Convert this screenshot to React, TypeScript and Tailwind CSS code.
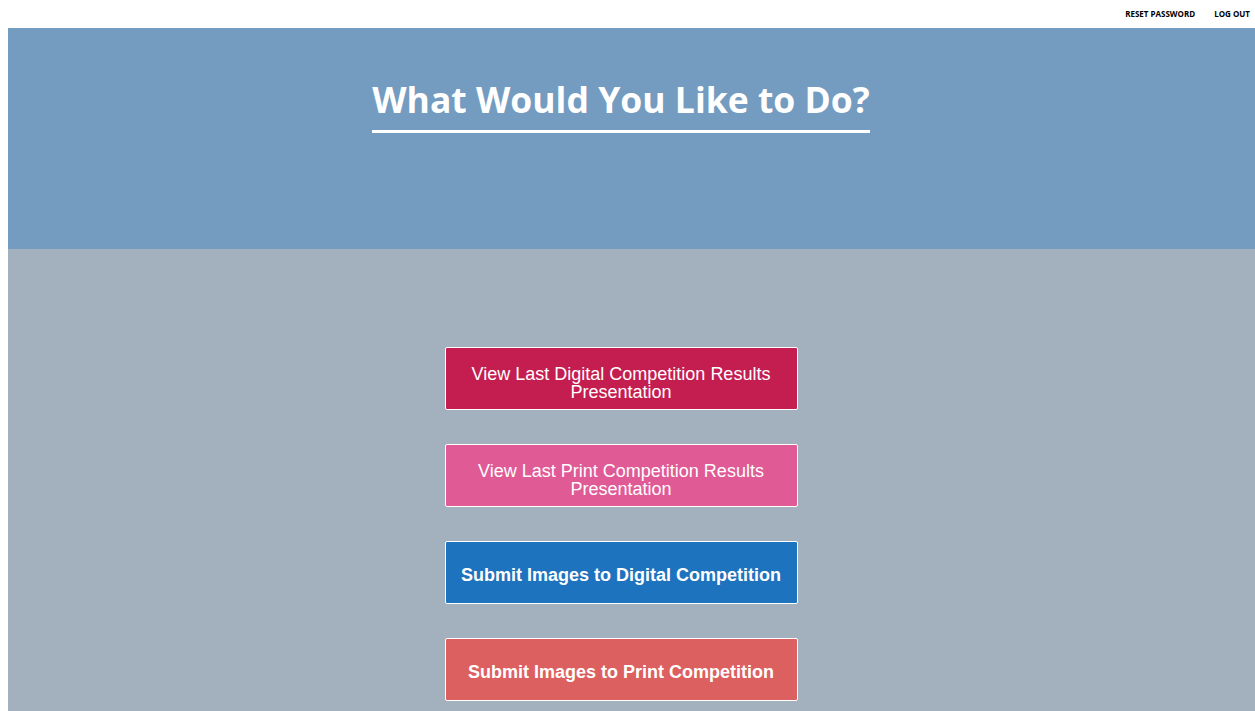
const actions = [
  { label: "View Last Digital Competition Results Presentation", bg: "bg-[#c41e51]", bold: false },
  { label: "View Last Print Competition Results Presentation", bg: "bg-[#e05a96]", bold: false },
  { label: "Submit Images to Digital Competition", bg: "bg-[#1e73be]", bold: true },
  { label: "Submit Images to Print Competition", bg: "bg-[#dd6060]", bold: true },
];

export default function App() {
  return (
    <div className="min-h-[711px] bg-white flex flex-col">
      {/* Top links */}
      <div className="h-[28px] flex items-center justify-end gap-[19px] pr-[5px] font-['Open_Sans',sans-serif] text-[8px] font-bold text-black">
        <a href="#">RESET PASSWORD</a>
        <a href="#">LOG OUT</a>
      </div>

      <div className="ml-[8px] flex-1 flex flex-col">
        {/* Banner */}
        <div className="h-[221px] bg-[#749cc0] pr-[21px] flex justify-center">
          <h1 className="mt-[49px] self-start border-b-[3px] border-white pb-[9px] font-['Open_Sans',sans-serif] text-[35.5px] leading-[44px] font-bold text-white">
            What Would You Like to Do?
          </h1>
        </div>

        {/* Actions */}
        <div className="flex-1 bg-[#a3b1bf] pr-[21px] pt-[98px] pb-[10px] flex flex-col items-center gap-[34px]">
          {actions.map((a) => (
            <button
              key={a.label}
              className={`${a.bg} w-[353px] h-[63px] border border-white rounded-[2px] px-[10px] text-white text-[18px] leading-[18px] font-['Liberation_Sans',Arial,sans-serif] ${
                a.bold ? "font-bold pt-[4px]" : "font-normal pt-[8px]"
              }`}
            >
              {a.label}
            </button>
          ))}
        </div>
      </div>
    </div>
  );
}
